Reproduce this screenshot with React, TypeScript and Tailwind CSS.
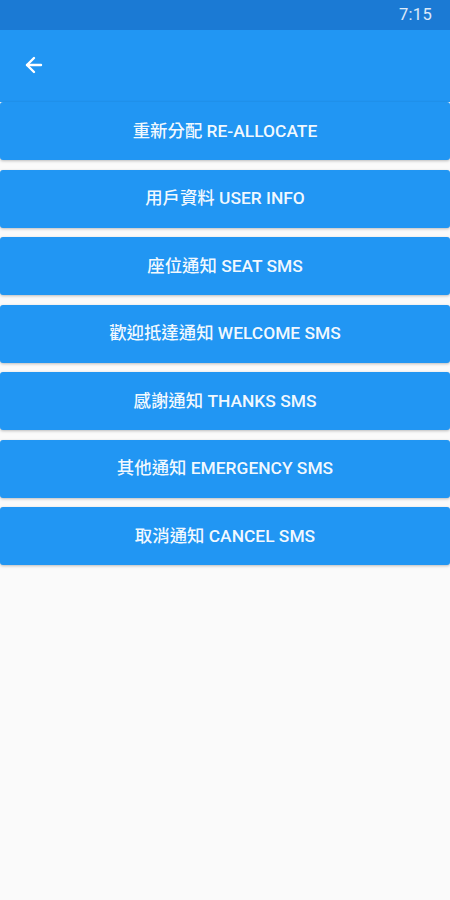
import { ArrowLeft } from "lucide-react";

const items = [
  "重新分配 RE-ALLOCATE",
  "用戶資料 USER INFO",
  "座位通知 SEAT SMS",
  "歡迎抵達通知 WELCOME SMS",
  "感謝通知 THANKS SMS",
  "其他通知 EMERGENCY SMS",
  "取消通知 CANCEL SMS",
];

const App = () => {
  return (
    <div
      className="w-[450px] h-[900px] bg-[#fafafa] flex flex-col"
      style={{ fontFamily: 'Roboto, "Noto Sans CJK TC", sans-serif' }}
    >
      {/* status bar */}
      <div className="h-[30px] bg-[#1b7ad4] flex items-center justify-end pr-[18px]">
        <span className="text-[16.5px] text-white/85 tracking-[0.3px]">7:15</span>
      </div>

      {/* app bar */}
      <div className="h-[72px] bg-[#2196f3] flex items-start pt-[23px] pl-[22px]">
        <ArrowLeft size={24} strokeWidth={2.4} className="text-white" />
      </div>

      {/* menu */}
      <div className="flex flex-col gap-[9.5px]">
        {items.map((label) => (
          <button
            key={label}
            className="h-[58px] w-full bg-[#2196f3] rounded-[3px] shadow-[0_1px_3px_rgba(0,0,0,0.25)] text-white/95 text-[17.4px] font-medium"
          >
            {label}
          </button>
        ))}
      </div>
    </div>
  );
};

export default App;
